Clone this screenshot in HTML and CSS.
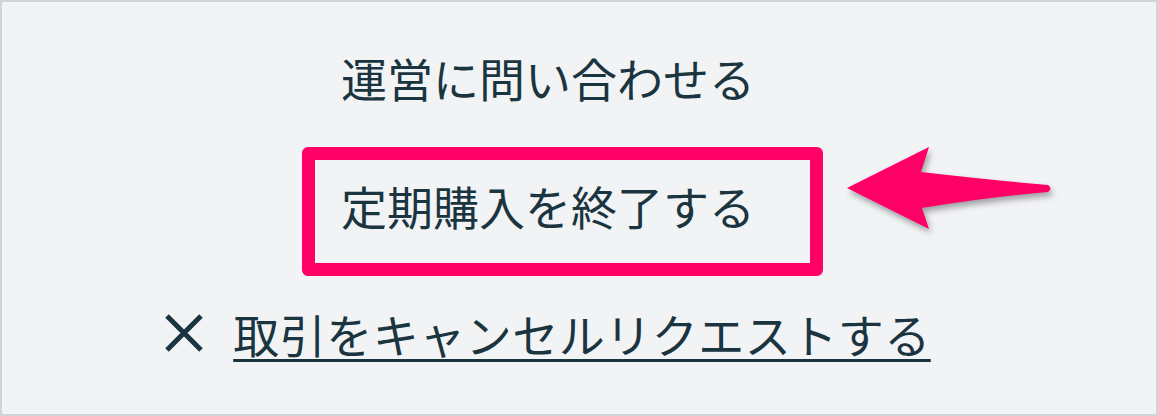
FILE: index.html
```html
<!DOCTYPE html>
<html lang="ja">
<head>
  <meta charset="UTF-8">
  <meta name="viewport" content="width=device-width, initial-scale=1.0">
  <title>取引メニュー</title>
  <link rel="stylesheet" href="styles.css">
</head>
<body>
  <div class="frame">
    <ul class="menu">
      <li class="menu-item">運営に問い合わせる</li>
      <li class="menu-item">定期購入を終了する</li>
      <li class="menu-item menu-cancel">
        <svg class="icon-close" width="38" height="38" viewBox="0 0 38 38">
          <path d="M2 2 L36 36 M36 2 L2 36" stroke="currentColor" stroke-width="5" fill="none"/>
        </svg>
        <a href="#" class="cancel-link">取引をキャンセルリクエストする</a>
      </li>
    </ul>

    <!-- highlight box + pointer arrow -->
    <div class="highlight"></div>
    <svg class="pointer" width="230" height="110" viewBox="0 0 230 110">
      <path d="M7 48 L89 7 L81 32 Q150 40 208 45 Q213 48.5 208 52 Q150 57 82 68 L89 89 Z" fill="#ff0066"/>
    </svg>
  </div>
</body>
</html>
```

FILE: styles.css
```css
* {
  margin: 0;
  padding: 0;
  box-sizing: border-box;
}

body {
  background: #f2f3f5;
  font-family: "Noto Sans CJK JP", "Noto Sans", sans-serif;
  color: #1b3540;
}

/* Outer frame */
.frame {
  position: relative;
  width: 1158px;
  height: 416px;
  background: #f2f3f5;
  border: 2px solid #cfd4d7;
  overflow: hidden;
}

/* Menu list */
.menu {
  list-style: none;
  display: flex;
  flex-direction: column;
  align-items: center;
  gap: 68px;
  padding: 45px 62px 0 0;
}

.menu-item {
  font-size: 46px;
  line-height: 60px;
  height: 60px;
}

.menu-cancel {
  display: flex;
  align-items: center;
  gap: 30px;
}

.icon-close {
  display: block;
  color: #1b3540;
}

.cancel-link {
  color: #1b3540;
  letter-spacing: 0.5px;
  text-decoration: underline;
  text-decoration-thickness: 3px;
  text-underline-offset: 6px;
}

/* Annotation overlay */
.highlight {
  position: absolute;
  left: 300px;
  top: 145px;
  width: 521px;
  height: 129px;
  border: 13px solid #ff0066;
  border-radius: 6px;
}

.pointer {
  position: absolute;
  left: 838px;
  top: 138px;
  filter: drop-shadow(2px 4px 3px rgba(0, 0, 0, 0.35));
}
```
